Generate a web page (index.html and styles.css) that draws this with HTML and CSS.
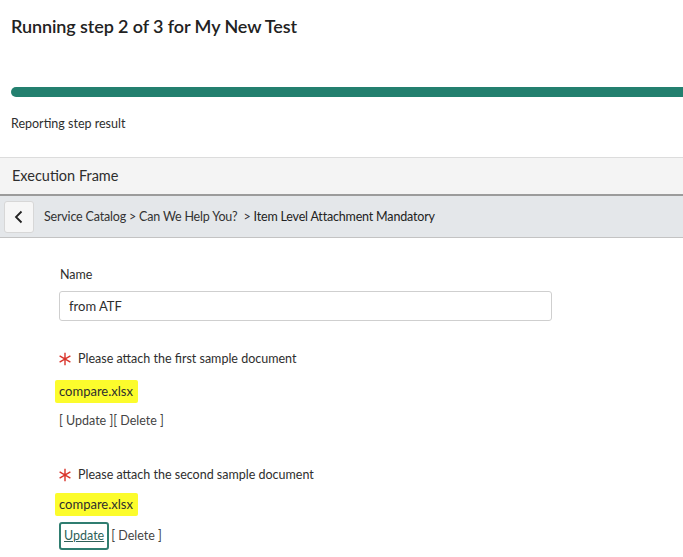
FILE: index.html
```html
<!DOCTYPE html>
<html>
<head>
<meta charset="utf-8">
<link rel="stylesheet" href="styles.css">
</head>
<body>
<div class="top">
  <h1 class="title">Running step 2 of 3 for My New Test</h1>
  <div class="progress"><div class="progress-fill"></div></div>
  <div class="status">Reporting step result</div>
</div>
<div class="frame-head">Execution Frame</div>
<div class="crumbbar">
  <button class="back"><svg width="12" height="14" viewBox="0 0 12 14"><path d="M8.5 1.5 L3 7 L8.5 12.5" fill="none" stroke="#222" stroke-width="1.8"/></svg></button>
  <div class="crumbs">Service Catalog &gt; Can We Help You?&nbsp; &gt; <span class="cur">Item Level Attachment Mandatory</span></div>
</div>
<div class="form">
  <div class="label">Name</div>
  <div class="input">from ATF</div>
  <div class="question q1"><svg class="star" width="14" height="14" viewBox="0 0 14 14"><path d="M7 0.8V13.2M1.6 3.9L12.4 10.1M1.6 10.1L12.4 3.9" stroke="#d9342b" stroke-width="1.4" fill="none"/></svg><span>Please attach the first sample document</span></div>
  <div class="file"><span class="hl">compare.xlsx</span></div>
  <div class="actions">[ Update ][ Delete ]</div>
  <div class="question q2"><svg class="star" width="14" height="14" viewBox="0 0 14 14"><path d="M7 0.8V13.2M1.6 3.9L12.4 10.1M1.6 10.1L12.4 3.9" stroke="#d9342b" stroke-width="1.4" fill="none"/></svg><span>Please attach the second sample document</span></div>
  <div class="file f2"><span class="hl">compare.xlsx</span></div>
  <div class="actions a2"><span class="focus">Update</span> [ Delete ]</div>
</div>
</body>
</html>
```
FILE: styles.css
```css
html, body { margin: 0; padding: 0; background: #fff; }
body { font-family: Lato, "Noto Sans", sans-serif; color: #2e2e2e; width: 683px; height: 557px; overflow: hidden; }
.top { padding: 14px 0 0 11px; }
.title { margin: 0; font-size: 18px; font-weight: 600; color: #222; line-height: 24px; letter-spacing: -0.1px; }
.progress { margin-top: 49px; height: 10px; background: #23806f; border-radius: 5px 0 0 5px; }
.status { margin-top: 19px; font-size: 12.5px; line-height: 16px; color: #2e2e2e; }
.frame-head { margin-top: 25px; background: #f4f4f4; border-top: 1px solid #dcdcdc; border-bottom: 2px solid #9b9b9b; height: 36px; line-height: 36px; padding-left: 12px; font-size: 14.5px; color: #2e2e2e; }
.crumbbar { display: flex; align-items: center; background: #e4e7ea; border-bottom: 1px solid #c3c3c3; height: 41px; padding-left: 4px; }
.back { width: 30px; height: 32px; background: #f6f6f6; border: 1px solid #d7d7d7; border-radius: 3px; display: flex; align-items: center; justify-content: center; padding: 0; margin-right: 10px; }
.crumbs { font-size: 12.5px; color: #333; letter-spacing: -0.18px; }
.cur { color: #222; }
.form { padding: 29px 0 0 59px; }
.label { font-size: 12.5px; line-height: 16px; padding-left: 1px; }
.input { margin-top: 8px; width: 493px; height: 30px; border: 1px solid #cfcfcf; border-radius: 3px; box-sizing: border-box; padding-left: 9px; line-height: 28px; font-size: 13px; }
.question { display: flex; align-items: center; gap: 6px; font-size: 12.5px; line-height: 16px; margin-top: 30px; }
.q2 { margin-top: 38px; }
.star { flex: none; margin-left: -1px; }
.file { margin-top: 13px; margin-left: -4px; }
.f2 { margin-top: 10px; }
.hl { background: #fcfc2c; font-size: 13px; padding: 3px 5px 4px 4px; border-radius: 2px; color: #2e2e2e; }
.actions { margin-top: 14px; font-size: 12.5px; color: #444; line-height: 16px; }
.a2 { margin-top: 10px; display: flex; align-items: center; gap: 2px; }
.focus { border: 2px solid #2f7d70; border-radius: 3px; padding: 4px 3px; text-decoration: underline; color: #2e5f58; }
```
